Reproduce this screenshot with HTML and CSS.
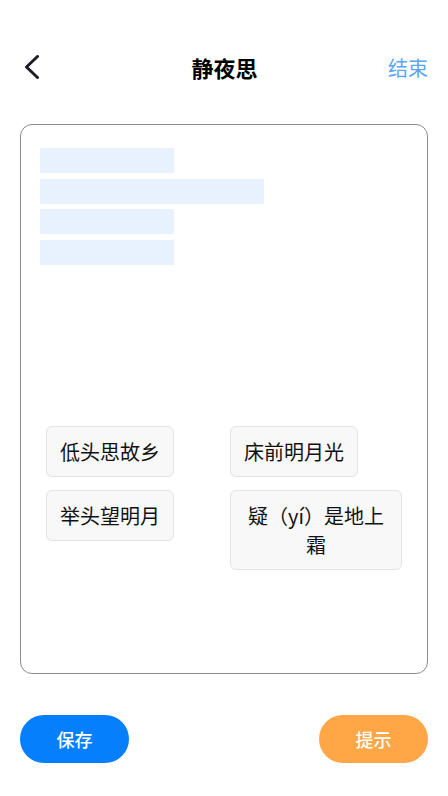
FILE: index.html
```html
<!DOCTYPE html>
<html lang="zh-CN">
<head>
    <meta charset="UTF-8">
    <meta name="viewport" content="width=device-width, initial-scale=1.0">
    <title>静夜思</title>
    <link rel="stylesheet" href="styles.css">
</head>
<body>
    <div class="page">
        <div class="header">
            <button class="back" aria-label="返回">
                <svg width="24" height="24" viewBox="0 0 24 24">
                    <polyline points="13.5,1.5 2.5,12 13.5,22.5" fill="none" stroke="#1c1c28" stroke-width="3" stroke-linecap="round" stroke-linejoin="round"/>
                </svg>
            </button>
            <h1>静夜思</h1>
            <a class="end">结束</a>
        </div>

        <div class="card">
            <!-- answer slots -->
            <div class="slots">
                <div class="slot"></div>
                <div class="slot wide"></div>
                <div class="slot"></div>
                <div class="slot"></div>
            </div>

            <div class="options">
                <div class="option">低头思故乡</div>
                <div class="option">床前明月光</div>
                <div class="option">举头望明月</div>
                <div class="option">疑（yí）是地上霜</div>
            </div>
        </div>

        <div class="actions">
            <button class="btn save">保存</button>
            <button class="btn hint">提示</button>
        </div>
    </div>
</body>
</html>
```

FILE: styles.css
```css
*{
    margin: 0;
    padding: 0;
    box-sizing: border-box;
}
body{
    background: #fff;
    font-family: "Noto Sans CJK SC", "Noto Sans", sans-serif;
    color: #111;
}
.page{
    width: 448px;
}
.header{
    display: flex;
    align-items: center;
    justify-content: space-between;
    height: 46px;
    margin-top: 44px;
    padding: 0 20px 0 24px;
}
.back{
    display: flex;
    align-items: center;
    width: 53px;
    background: none;
    border: none;
}
.header h1{
    font-size: 22px;
    font-weight: 600;
    color: #000;
}
.end{
    width: 56px;
    text-align: right;
    font-size: 20px;
    color: #5aa6f3;
}
.card{
    margin: 34px 20px 0;
    height: 550px;
    border: 1px solid #8c8c8c;
    border-radius: 12px;
    padding: 23px 19px;
}
.slots{
    display: flex;
    flex-direction: column;
    align-items: flex-start;
    gap: 5.5px;
}
.slot{
    width: 134px;
    height: 25px;
    background: #e8f2fe;
}
.slot.wide{
    width: 224px;
}
.options{
    display: grid;
    grid-template-columns: 172px 172px;
    column-gap: 12px;
    row-gap: 13px;
    align-items: start;
    margin: 161px 0 0 6px;
}
.option{
    justify-self: start;
    max-width: 172px;
    padding: 10px 13px;
    background: #f8f8f8;
    border: 1px solid #e4e4e4;
    border-radius: 6px;
    font-size: 20px;
    line-height: 29px;
    text-align: center;
    color: #111;
}
.actions{
    display: flex;
    justify-content: space-between;
    margin: 41px 20px 0;
}
.btn{
    width: 109px;
    height: 48px;
    border: none;
    border-radius: 24px;
    color: #fff;
    font-family: "Noto Sans CJK SC", sans-serif;
    font-size: 18px;
    font-weight: 500;
}
.save{
    background: #057ffc;
}
.hint{
    background: #ffa646;
}
```
